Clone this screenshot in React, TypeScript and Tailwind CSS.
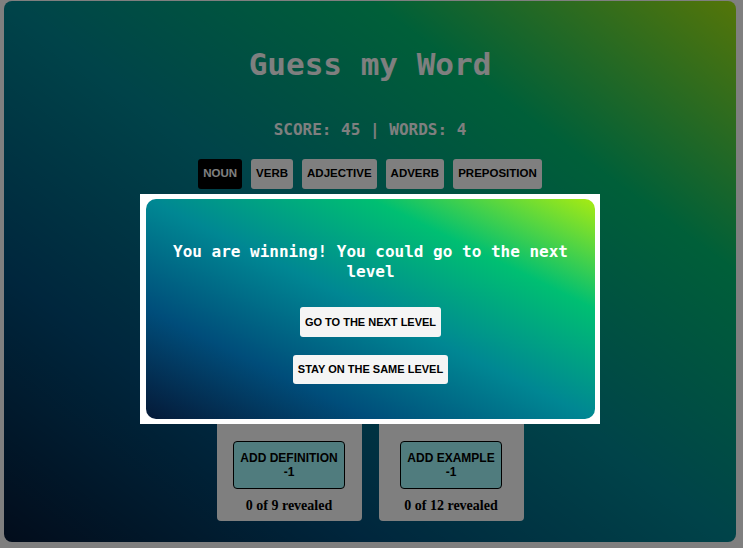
import React from "react";

const grad = "bg-[linear-gradient(to_right_top,#051937,#004d7a,#008793,#00bf72,#a8eb12)]";

export default function App() {
  const cats = ["NOUN", "VERB", "ADJECTIVE", "ADVERB", "PREPOSITION"];
  return (
    <div className="relative w-[743px] h-[548px] bg-white overflow-hidden">
      <div className="pl-[4px] pr-[7px] pt-px">
        <div className={`h-[541px] rounded-[8px] ${grad} flex flex-col items-center`}>
          <h1 className="mt-[43px] text-[31px] leading-[40px] font-bold text-white [font-family:'DejaVu_Sans_Mono',monospace]">
            Guess my Word
          </h1>
          <div className="mt-[36px] text-[16px] leading-[20px] font-bold text-white [font-family:'DejaVu_Sans_Mono',monospace]">
            SCORE: 45 | WORDS: 4
          </div>
          <div className="mt-[19px] flex gap-[9px] [font-family:'Liberation_Sans',sans-serif]">
            {cats.map((c, i) => (
              <button
                key={c}
                className={`h-[30px] px-[5px] rounded-[3px] text-[11.5px] font-bold ${
                  i === 0 ? "bg-black text-white" : "bg-white text-black"
                }`}
              >
                {c}
              </button>
            ))}
          </div>
          <div className="mt-[211px] flex gap-[17px] [font-family:'Liberation_Sans',sans-serif]">
            {[
              ["ADD DEFINITION", "0 of 9 revealed"],
              ["ADD EXAMPLE", "0 of 12 revealed"],
            ].map(([b, r]) => (
              <div key={b} className="w-[145px] h-[121px] rounded-[4px] bg-white flex flex-col items-center justify-end pb-[6px]">
                <button className="px-[6px] h-[48px] rounded-[4px] border border-black bg-[#a0f8fc] text-black text-[12px] leading-[14px] font-bold">
                  {b}
                  <br />
                  -1
                </button>
                <div className="mt-[8px] text-[14px] leading-[18px] font-bold text-black [font-family:'Liberation_Serif',serif]">
                  {r}
                </div>
              </div>
            ))}
          </div>
        </div>
      </div>

      <div className="absolute inset-0 bg-black/50" />

      <div className="absolute left-[140px] top-[194px] w-[460px] h-[230px] bg-white pl-[6px] pr-[5px] py-[5px]">
        <div className={`h-full rounded-[10px] ${grad} flex flex-col items-center`}>
          <p className="mt-[43px] px-[20px] text-center text-[16px] leading-[20px] font-bold text-white [font-family:'DejaVu_Sans_Mono',monospace]">
            You are winning! You could go to the next level
          </p>
          <button className="mt-[25px] h-[30px] px-[5px] rounded-[3px] bg-[#f5f5f5] text-black text-[11px] font-bold [font-family:'Liberation_Sans',sans-serif]">
            GO TO THE NEXT LEVEL
          </button>
          <button className="mt-[18px] h-[29px] px-[5px] rounded-[3px] bg-[#f5f5f5] text-black text-[11px] font-bold [font-family:'Liberation_Sans',sans-serif]">
            STAY ON THE SAME LEVEL
          </button>
        </div>
      </div>
    </div>
  );
}
